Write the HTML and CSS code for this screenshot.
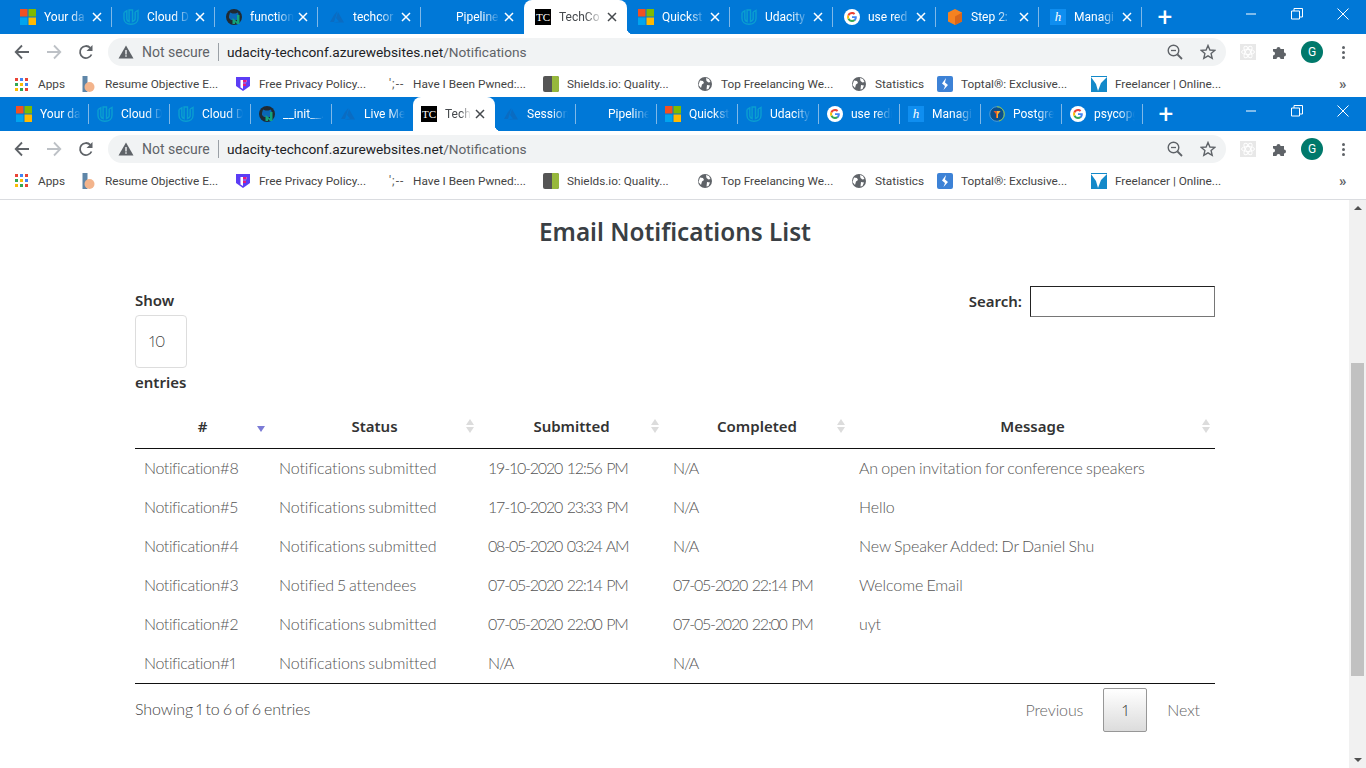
FILE: index.html
```html
<!DOCTYPE html>
<html lang="en">
<head>
  <meta charset="UTF-8">
  <title>TechConf - Email Notifications</title>
  <link rel="stylesheet" href="styles.css">
</head>
<body>
  <svg class="defs" width="0" height="0" aria-hidden="true">
    <symbol id="i-ms" viewBox="0 0 16 16">
      <rect width="7.500" height="7.500" fill="#f25022"/><rect x="8.500" width="7.500" height="7.500" fill="#7fba00"/>
      <rect y="8.500" width="7.500" height="7.500" fill="#00a4ef"/><rect x="8.500" y="8.500" width="7.500" height="7.500" fill="#ffb900"/>
    </symbol>
    <symbol id="i-uda" viewBox="0 0 16 16">
      <g fill="none" stroke="#0a9fd0" stroke-width="1.400">
        <path d="M1 3.500v6c0 3.500 3 5.800 7 5.800s7-2.300 7-5.800V1.500l-2.800 1.500"/>
        <path d="M1 3.500L3.800 1.800v7.700c0 1.600.8 2.700 2.300 3.200V1h3.400v11.500c1.600-.5 2.700-1.500 2.700-3V3"/>
      </g>
    </symbol>
    <symbol id="i-gh" viewBox="0 0 16 16">
      <circle cx="8" cy="8" r="8" fill="#1f2a33"/>
      <path d="M3 7l1-3.500 2.500 1h3l2.500-1L13 7v2l-2 2H5L3 9z" fill="#0a66b5"/>
      <path d="M6.500 15V9l4.500 3.500V6h2.500v9H11L9 13v2z" fill="#12a37c"/>
    </symbol>
    <symbol id="i-az" viewBox="0 0 16 16">
      <path d="M8.500 2L5 6 1 13h4zM9 3L7 9l3 3.500-5 1h10z" fill="#0a6cc2"/>
    </symbol>
    <symbol id="i-g" viewBox="0 0 16 16">
      <circle cx="8" cy="8" r="8" fill="#fff"/>
      <path d="M12.800 8.200c0-.4 0-.7-.1-1H8v1.900h2.700c-.1.700-.5 1.200-1 1.600l1.500 1.200c.9-.9 1.600-2.100 1.600-3.700z" fill="#4285f4"/>
      <path d="M8 13c1.300 0 2.400-.4 3.200-1.200l-1.500-1.200c-.4.3-1 .5-1.700.5-1.300 0-2.400-.9-2.800-2L3.600 10.300C4.400 11.900 6.100 13 8 13z" fill="#34a853"/>
      <path d="M5.200 9.100c-.2-.7-.2-1.500 0-2.200L3.600 5.700c-.7 1.400-.7 3.200 0 4.600z" fill="#fbbc05"/>
      <path d="M8 5c.7 0 1.400.3 1.900.7l1.400-1.400C10.400 3.500 9.300 3 8 3 6.100 3 4.400 4.100 3.600 5.700l1.600 1.200C5.600 5.800 6.700 5 8 5z" fill="#ea4335"/>
    </symbol>
    <symbol id="i-cube" viewBox="0 0 16 16">
      <path d="M8 0l7 3.500v9L8 16l-7-3.500v-9z" fill="#f58220"/><path d="M8 7.500V16l7-3.500v-9z" fill="#d9661a"/>
    </symbol>
    <symbol id="i-pg" viewBox="0 0 16 16">
      <circle cx="8" cy="8" r="7.300" fill="#0a4f8c" stroke="#4c9bd6"/>
      <path d="M8 .7A7.300 7.300 0 0 1 15.300 8A7.300 7.300 0 0 1 10 15" fill="none" stroke="#8bc34a"/>
      <path d="M4.500 5h7L9 8v4H7V8z" fill="#e65a2b"/><path d="M8 5h3.500L9 8v4H8z" fill="#f2b134"/>
    </symbol>
    <symbol id="i-globe" viewBox="0 0 16 16">
      <circle cx="8" cy="8" r="7" fill="#5f6368"/>
      <path d="M3 4.500l3 .5 1 2-2 1.500-1 3.500-2.500-3zM9 2l3 1 1.500 3-2 .5-2-1.500zM10 9l3 .5-1.500 3.500-2 .5z" fill="#fff"/>
    </symbol>
    <symbol id="i-close" viewBox="0 0 10 10">
      <path d="M1 1l8 8M9 1L1 9" fill="none" stroke="currentColor" stroke-width="1.500"/>
    </symbol>
    <symbol id="i-warn" viewBox="0 0 16 16"><path d="M8 1.500L15.500 14.500H.5z" fill="#5f6368"/><path d="M7.300 6h1.400v4.500H7.300zM7.300 11.300h1.400v1.400H7.300z" fill="#f1f3f4"/></symbol>
    <symbol id="i-back" viewBox="0 0 16 16"><path d="M15 8H2M8 1.500L1.700 8 8 14.500" fill="none" stroke="currentColor" stroke-width="1.800"/></symbol>
    <symbol id="i-reload" viewBox="0 0 16 16"><path d="M13.500 10.500A6 6 0 1 1 12.300 3.800" fill="none" stroke="#5f6368" stroke-width="1.800"/><path d="M14.500 1v6h-6z" fill="#5f6368"/></symbol>
    <symbol id="i-zoom" viewBox="0 0 16 16"><circle cx="6.500" cy="6.500" r="5.300" fill="none" stroke="#5f6368" stroke-width="1.400"/><path d="M10.500 10.500L15 15" stroke="#5f6368" stroke-width="1.800"/><path d="M4 6.500h5" stroke="#5f6368" stroke-width="1.300"/></symbol>
    <symbol id="i-star" viewBox="0 0 16 16"><path d="M8 1.500l1.900 4.500 4.800.4-3.600 3.200 1.100 4.700L8 11.800l-4.200 2.500 1.100-4.700-3.600-3.200 4.800-.4z" fill="none" stroke="#5f6368" stroke-width="1.400"/></symbol>
    <symbol id="i-atom" viewBox="0 0 16 16"><rect width="16" height="16" fill="#e8e8e8"/><g fill="none" stroke="#fff"><ellipse cx="8" cy="8" rx="6.500" ry="2.500"/><ellipse cx="8" cy="8" rx="6.500" ry="2.500" transform="rotate(60 8 8)"/><ellipse cx="8" cy="8" rx="6.500" ry="2.500" transform="rotate(120 8 8)"/></g></symbol>
    <symbol id="i-puzzle" viewBox="0 0 16 16"><path d="M1 5h3.500a2 2 0 1 1 4 0H12v3.500a2 2 0 1 1 0 4V15H8.500a2 2 0 1 0-4 0H1v-3.500a2 2 0 1 0 0-4z" fill="#5f6368"/></symbol>
    <symbol id="i-apps" viewBox="0 0 13 13">
      <rect width="3" height="3" fill="#ea4335"/><rect x="5" width="3" height="3" fill="#4285f4"/><rect x="10" width="3" height="3" fill="#ea4335"/>
      <rect y="5" width="3" height="3" fill="#34a853"/><rect x="5" y="5" width="3" height="3" fill="#fbbc05"/><rect x="10" y="5" width="3" height="3" fill="#4285f4"/>
      <rect y="10" width="3" height="3" fill="#fbbc05"/><rect x="5" y="10" width="3" height="3" fill="#34a853"/><rect x="10" y="10" width="3" height="3" fill="#ea4335"/>
    </symbol>
    <symbol id="i-resume" viewBox="0 0 16 16"><rect x="1.500" width="5" height="16" fill="#5f86a8"/><circle cx="8.500" cy="11" r="5" fill="#f3b48c"/></symbol>
    <symbol id="i-fp" viewBox="0 0 16 16"><path d="M1 1h14v9l-7 5-7-5z" fill="#5b3df5"/><path d="M5.500 4h6v2.200H8v1.600h3v2.100H8V13L5.500 11.500z" fill="#fff"/><path d="M8 4h3.500v2.200H8zM8 7.800h3v2.100H8z" fill="#e6197c"/></symbol>
    <symbol id="i-shields" viewBox="0 0 16 16"><rect width="16" height="16" rx="2" fill="#555"/><path d="M9 0h5a2 2 0 0 1 2 2v12a2 2 0 0 1-2 2H9z" fill="#97b83c"/></symbol>
    <symbol id="i-toptal" viewBox="0 0 16 16"><rect width="16" height="16" rx="2" fill="#3d82d6"/><path d="M9 2L5 7.500 8 10 6.500 14l4.500-5-3-2.500z" fill="#fff"/></symbol>
    <symbol id="i-free" viewBox="0 0 16 16"><rect width="16" height="16" fill="#1389c9"/><path d="M0 1h16L10 7l-3 8-2-7z" fill="#fff"/></symbol>
  </svg>

  <div class="screen">
    <header class="browser">
      <div class="tabstrip tabstrip-wide">
        <div class="tab"><svg class="fav"><use href="#i-ms"/></svg><span class="tab-title">Your da</span><svg class="tab-x"><use href="#i-close"/></svg></div>
        <div class="tab"><svg class="fav"><use href="#i-uda"/></svg><span class="tab-title">Cloud D</span><svg class="tab-x"><use href="#i-close"/></svg></div>
        <div class="tab"><svg class="fav"><use href="#i-gh"/></svg><span class="tab-title">function</span><svg class="tab-x"><use href="#i-close"/></svg></div>
        <div class="tab"><svg class="fav"><use href="#i-az"/></svg><span class="tab-title">techcor</span><svg class="tab-x"><use href="#i-close"/></svg></div>
        <div class="tab"><span class="fav"></span><span class="tab-title">Pipeline</span><svg class="tab-x"><use href="#i-close"/></svg></div>
        <div class="tab tab-active"><span class="fav fav-tc">TC</span><span class="tab-title">TechCo</span><svg class="tab-x"><use href="#i-close"/></svg></div>
        <div class="tab"><svg class="fav"><use href="#i-ms"/></svg><span class="tab-title">Quickst</span><svg class="tab-x"><use href="#i-close"/></svg></div>
        <div class="tab"><svg class="fav"><use href="#i-uda"/></svg><span class="tab-title">Udacity</span><svg class="tab-x"><use href="#i-close"/></svg></div>
        <div class="tab"><svg class="fav"><use href="#i-g"/></svg><span class="tab-title">use red</span><svg class="tab-x"><use href="#i-close"/></svg></div>
        <div class="tab"><svg class="fav"><use href="#i-cube"/></svg><span class="tab-title">Step 2:</span><svg class="tab-x"><use href="#i-close"/></svg></div>
        <div class="tab"><span class="fav fav-h">h</span><span class="tab-title">Managi</span><svg class="tab-x"><use href="#i-close"/></svg></div>
        <button class="new-tab">+</button>
        <div class="winctl">
          <svg width="12" height="12" viewBox="0 0 12 12"><path d="M1 6h10" stroke="#fff"/></svg>
          <svg width="12" height="12" viewBox="0 0 12 12"><path d="M.5 3h8v8h-8zM3 3V.5h8.500V9H8.500" fill="none" stroke="#fff"/></svg>
          <svg width="12" height="12" viewBox="0 0 12 12"><path d="M.5.500l11 11M11.500.500l-11 11" stroke="#fff"/></svg>
        </div>
      </div>
      <div class="toolbar">
        <svg class="nav"><use href="#i-back"/></svg>
        <svg class="nav nav-off nav-flip"><use href="#i-back"/></svg>
        <svg class="nav"><use href="#i-reload"/></svg>
        <div class="omnibox">
          <svg class="warn"><use href="#i-warn"/></svg>
          <span class="not-secure">Not secure</span>
          <span class="url"><b>udacity-techconf.azurewebsites.net</b>/Notifications</span>
          <svg class="omni-ic"><use href="#i-zoom"/></svg>
          <svg class="omni-ic"><use href="#i-star"/></svg>
        </div>
        <svg class="ext"><use href="#i-atom"/></svg>
        <svg class="ext"><use href="#i-puzzle"/></svg>
        <span class="avatar">G</span>
        <span class="kebab"><i></i><i></i><i></i></span>
      </div>
      <div class="bookmarks">
        <a><svg class="bm-ic bm-apps"><use href="#i-apps"/></svg>Apps</a>
        <a><svg class="bm-ic"><use href="#i-resume"/></svg>Resume Objective E...</a>
        <a><svg class="bm-ic"><use href="#i-fp"/></svg>Free Privacy Policy...</a>
        <a><span class="bm-ic bm-semi">';--</span>Have I Been Pwned:...</a>
        <a><svg class="bm-ic"><use href="#i-shields"/></svg>Shields.io: Quality...</a>
        <a><svg class="bm-ic"><use href="#i-globe"/></svg>Top Freelancing We...</a>
        <a><svg class="bm-ic"><use href="#i-globe"/></svg>Statistics</a>
        <a><svg class="bm-ic"><use href="#i-toptal"/></svg>Toptal®: Exclusive...</a>
        <a><svg class="bm-ic"><use href="#i-free"/></svg>Freelancer | Online...</a>
        <span class="bm-more">»</span>
      </div>
    </header>

    <header class="browser browser-second">
      <div class="tabstrip tabstrip-narrow">
        <div class="tab"><svg class="fav"><use href="#i-ms"/></svg><span class="tab-title">Your da</span></div>
        <div class="tab"><svg class="fav"><use href="#i-uda"/></svg><span class="tab-title">Cloud D</span></div>
        <div class="tab"><svg class="fav"><use href="#i-uda"/></svg><span class="tab-title">Cloud D</span></div>
        <div class="tab"><svg class="fav"><use href="#i-gh"/></svg><span class="tab-title">__init__.</span></div>
        <div class="tab"><svg class="fav"><use href="#i-az"/></svg><span class="tab-title">Live Me</span></div>
        <div class="tab tab-active"><span class="fav fav-tc">TC</span><span class="tab-title">Tech</span><svg class="tab-x"><use href="#i-close"/></svg></div>
        <div class="tab"><svg class="fav"><use href="#i-az"/></svg><span class="tab-title">Session</span></div>
        <div class="tab"><span class="fav"></span><span class="tab-title">Pipeline</span></div>
        <div class="tab"><svg class="fav"><use href="#i-ms"/></svg><span class="tab-title">Quickst</span></div>
        <div class="tab"><svg class="fav"><use href="#i-uda"/></svg><span class="tab-title">Udacity</span></div>
        <div class="tab"><svg class="fav"><use href="#i-g"/></svg><span class="tab-title">use redi</span></div>
        <div class="tab"><span class="fav fav-h">h</span><span class="tab-title">Managi</span></div>
        <div class="tab"><svg class="fav"><use href="#i-pg"/></svg><span class="tab-title">Postgre</span></div>
        <div class="tab"><svg class="fav"><use href="#i-g"/></svg><span class="tab-title">psycopg</span></div>
        <button class="new-tab">+</button>
        <div class="winctl">
          <svg width="12" height="12" viewBox="0 0 12 12"><path d="M1 6h10" stroke="#fff"/></svg>
          <svg width="12" height="12" viewBox="0 0 12 12"><path d="M.5 3h8v8h-8zM3 3V.5h8.500V9H8.500" fill="none" stroke="#fff"/></svg>
          <svg width="12" height="12" viewBox="0 0 12 12"><path d="M.5.500l11 11M11.500.500l-11 11" stroke="#fff"/></svg>
        </div>
      </div>
      <div class="toolbar">
        <svg class="nav"><use href="#i-back"/></svg>
        <svg class="nav nav-off nav-flip"><use href="#i-back"/></svg>
        <svg class="nav"><use href="#i-reload"/></svg>
        <div class="omnibox">
          <svg class="warn"><use href="#i-warn"/></svg>
          <span class="not-secure">Not secure</span>
          <span class="url"><b>udacity-techconf.azurewebsites.net</b>/Notifications</span>
          <svg class="omni-ic"><use href="#i-zoom"/></svg>
          <svg class="omni-ic"><use href="#i-star"/></svg>
        </div>
        <svg class="ext"><use href="#i-atom"/></svg>
        <svg class="ext"><use href="#i-puzzle"/></svg>
        <span class="avatar">G</span>
        <span class="kebab"><i></i><i></i><i></i></span>
      </div>
      <div class="bookmarks">
        <a><svg class="bm-ic bm-apps"><use href="#i-apps"/></svg>Apps</a>
        <a><svg class="bm-ic"><use href="#i-resume"/></svg>Resume Objective E...</a>
        <a><svg class="bm-ic"><use href="#i-fp"/></svg>Free Privacy Policy...</a>
        <a><span class="bm-ic bm-semi">';--</span>Have I Been Pwned:...</a>
        <a><svg class="bm-ic"><use href="#i-shields"/></svg>Shields.io: Quality...</a>
        <a><svg class="bm-ic"><use href="#i-globe"/></svg>Top Freelancing We...</a>
        <a><svg class="bm-ic"><use href="#i-globe"/></svg>Statistics</a>
        <a><svg class="bm-ic"><use href="#i-toptal"/></svg>Toptal®: Exclusive...</a>
        <a><svg class="bm-ic"><use href="#i-free"/></svg>Freelancer | Online...</a>
        <span class="bm-more">»</span>
      </div>
    </header>

    <div class="viewport">
      <main class="content">
        <h1>Email Notifications List</h1>
        <div class="dt-top">
          <div class="dt-length">
            <label>Show</label>
            <div class="dt-select">10</div>
            <label>entries</label>
          </div>
          <div class="dt-search">
            <label>Search:</label>
            <input type="text">
          </div>
        </div>
        <table class="dt">
          <colgroup>
            <col class="c1"><col class="c2"><col class="c3"><col class="c4"><col class="c5">
          </colgroup>
          <thead>
            <tr>
              <th class="sorted">#</th>
              <th>Status</th>
              <th>Submitted</th>
              <th>Completed</th>
              <th>Message</th>
            </tr>
          </thead>
          <tbody>
            <tr><td>Notification#8</td><td>Notifications submitted</td><td>19-10-2020 12:56 PM</td><td>N/A</td><td>An open invitation for conference speakers</td></tr>
            <tr><td>Notification#5</td><td>Notifications submitted</td><td>17-10-2020 23:33 PM</td><td>N/A</td><td>Hello</td></tr>
            <tr><td>Notification#4</td><td>Notifications submitted</td><td>08-05-2020 03:24 AM</td><td>N/A</td><td>New Speaker Added: Dr Daniel Shu</td></tr>
            <tr><td>Notification#3</td><td>Notified 5 attendees</td><td>07-05-2020 22:14 PM</td><td>07-05-2020 22:14 PM</td><td>Welcome Email</td></tr>
            <tr><td>Notification#2</td><td>Notifications submitted</td><td>07-05-2020 22:00 PM</td><td>07-05-2020 22:00 PM</td><td>uyt</td></tr>
            <tr><td>Notification#1</td><td>Notifications submitted</td><td>N/A</td><td>N/A</td><td></td></tr>
          </tbody>
        </table>
        <div class="dt-bottom">
          <div class="dt-info">Showing 1 to 6 of 6 entries</div>
          <div class="dt-pages">
            <a>Previous</a>
            <a class="current">1</a>
            <a>Next</a>
          </div>
        </div>
      </main>
      <div class="scrollbar">
        <span class="sb-up"></span>
        <div class="sb-thumb"></div>
        <span class="sb-down"></span>
      </div>
    </div>
  </div>
</body>
</html>
```

FILE: styles.css
```css
* { box-sizing: border-box; }
body { margin: 0; font-family: "Lato", Arial, sans-serif; font-weight: 300; font-size: 16px; color: #555; background: #fff; letter-spacing: -0.1px; word-spacing: -1px; font-variant-numeric: proportional-nums; }
.defs { position: absolute; }
.screen { width: 1366px; height: 768px; overflow: hidden; display: flex; flex-direction: column; }

/* browser chrome */
.browser { font-family: "Roboto", Arial, sans-serif; font-weight: 400; flex: none; letter-spacing: 0; word-spacing: 0; }
.browser-second { border-bottom: 1px solid #dadce0; }
.tabstrip { height: 34px; background: #0078d7; display: flex; color: #fff; font-size: 12px; position: relative; }
.tabstrip-wide { padding-left: 9px; }
.tabstrip-narrow { padding-left: 8px; }
.tab { height: 34px; display: flex; align-items: center; position: relative; flex: none; }
.tab::after { content: ""; position: absolute; right: 0; top: 7px; width: 1px; height: 20px; background: #7fb8e8; }
.tab:has(+ .tab-active)::after { display: none; }
.tabstrip-wide .tab { width: 103px; padding-left: 11px; }
.tabstrip-narrow .tab { width: 81px; padding-left: 8px; }
.tab-active { background: #fff; color: #45494d; border-radius: 8px 8px 0 0; }
.tab-active::after { display: none; }
.tab-active::before { content: ""; position: absolute; right: -6px; bottom: 0; width: 6px; height: 6px; background: radial-gradient(circle at 100% 0, transparent 6px, #fff 6.500px); }
.tabstrip-narrow .tab-active { width: 82px; }
.fav { width: 16px; height: 16px; flex: none; margin-right: 8px; }
.fav-tc { background: #000; color: #fff; font: 11px/16px "Liberation Serif", serif; text-align: center; }
.fav-h { background: #0f8ef0; color: #fff; font: italic 13px/16px "Liberation Serif", serif; text-align: center; }
.tab-title { flex: 1; min-width: 0; overflow: hidden; white-space: nowrap; -webkit-mask-image: linear-gradient(90deg, #000 60%, transparent); mask-image: linear-gradient(90deg, #000 60%, transparent); }
.tabstrip-wide .tab-title { max-width: 44px; }
.tabstrip-narrow .tab-title { max-width: 41px; }
.tabstrip-narrow .tab-active .tab-title { max-width: 26px; }
.tab-x { width: 10px; height: 10px; flex: none; margin-left: auto; margin-right: 10px; color: #fff; }
.tab-active .tab-x { color: #45494d; }
.new-tab { width: 20px; height: 34px; margin-left: 13px; padding: 0; background: none; border: 0; color: #fff; font: 400 26px/32px "Roboto", Arial, sans-serif; flex: none; }
.winctl { position: absolute; right: 17px; top: 8px; display: flex; gap: 34px; }

.toolbar { height: 34px; background: #fff; display: flex; align-items: center; padding: 2px 0 0 14px; }
.nav { width: 16px; height: 16px; margin-right: 16px; color: #5f6368; flex: none; }
.nav-off { color: #bdc1c6; }
.nav-flip { transform: scaleX(-1); }
.omnibox { width: 1118px; height: 28px; margin-left: -2px; margin-right: 14px; border-radius: 14px; background: #f1f3f4; display: flex; align-items: center; padding-left: 10px; font-size: 14px; color: #5f6368; flex: none; }
.warn { width: 16px; height: 16px; margin-right: 8px; flex: none; }
.not-secure { width: 77px; border-right: 1px solid #9aa0a6; line-height: 18px; white-space: nowrap; }
.url { margin-left: 8px; flex: 1; white-space: nowrap; font-size: 13.700px; }
.url b { font-weight: 400; color: #202124; }
.omni-ic { width: 16px; height: 16px; margin-right: 17px; flex: none; }
.omni-ic:last-child { margin-right: 10px; }
.ext { width: 16px; height: 16px; margin-right: 16px; flex: none; }
.ext + .ext { margin-right: 13px; }
.avatar { width: 22px; height: 22px; border-radius: 50%; background: #00796b; color: #fff; text-align: center; font-size: 12px; line-height: 22px; flex: none; }
.kebab { margin-left: 19px; display: flex; flex-direction: column; gap: 2px; }
.kebab i { width: 3px; height: 3px; border-radius: 50%; background: #5f6368; display: block; }

.bookmarks { height: 29px; background: #fff; display: grid; grid-template-columns: 66px 154px 154px 154px 154px 154px 86px 154px 228px 1fr; padding: 3px 0 0 15px; align-items: center; font-size: 11.800px; color: #444; white-space: nowrap; }
.browser-second .bookmarks { height: 34px; padding: 0 0 3px 15px; }
.bookmarks a { display: flex; align-items: center; }
.bm-ic { width: 16px; height: 16px; margin-right: 8px; flex: none; }
.bm-apps { width: 13px; height: 13px; margin-right: 10px; }
.bm-semi { color: #555; font-size: 12px; line-height: 16px; letter-spacing: 1px; }
.bm-more { font-size: 15px; font-weight: 700; color: #5f6368; padding-left: 20px; }

/* page */
.viewport { flex: 1; min-height: 0; display: flex; }
.content { flex: 1; min-width: 0; padding: 0 134px 0 135px; }
h1 { margin: 13px 0 0; height: 39px; font: 600 24.300px/38px "Noto Sans", Arial, sans-serif; letter-spacing: 0; word-spacing: 0; color: #3a3f44; text-align: center; }
.dt-top { display: flex; justify-content: space-between; margin-top: 34px; }
.dt-length label, .dt-search label { display: block; font: 600 15px/22px "Noto Sans", Arial, sans-serif; letter-spacing: 0; word-spacing: 0; color: #333; }
.dt-length { padding-top: 3px; }
.dt-select { width: 52px; height: 53px; margin: 4px 0 3px; padding-left: 13px; border: 1px solid #ddd; border-radius: 4px; line-height: 50px; color: #444; }
.dt-search { display: flex; gap: 8px; align-items: center; height: 31px; }
.dt-search label { margin-top: -2px; }
.dt-search input { width: 185px; height: 31px; border: 1px solid #767676; border-top-color: #222; border-left-color: #222; background: #fff; }

.dt { width: 1080px; border-collapse: collapse; table-layout: fixed; margin-top: 11px; border-bottom: 1px solid #111; }
.c1 { width: 135px; } .c2 { width: 209px; } .c3 { width: 185px; } .c4 { width: 186px; } .c5 { width: 365px; }
.dt th { height: 44px; position: relative; font: 600 15px/22px "Noto Sans", Arial, sans-serif; letter-spacing: 0; word-spacing: 0; color: #333; border-bottom: 1px solid #111; padding: 0; text-align: center; }
.dt th::before, .dt th::after { content: ""; position: absolute; right: 5px; border-left: 4px solid transparent; border-right: 4px solid transparent; }
.dt th::before { top: 15px; border-bottom: 6px solid #dcdcdc; }
.dt th::after { top: 23px; border-top: 6px solid #dcdcdc; }
.dt th.sorted::before { border-bottom-color: transparent; }
.dt th.sorted::after { top: 22px; border-top-color: #7b7bd6; }
.dt td { height: 39px; padding: 0 9px; white-space: nowrap; color: #555; }
.dt td:first-child { letter-spacing: -0.4px; }
.dt td:nth-child(3), .dt td:nth-child(4) { font-variant-numeric: tabular-nums; letter-spacing: -1.200px; word-spacing: 1.500px; }
.dt tr:last-child td { height: 40px; padding-bottom: 1px; }
.dt-bottom { display: flex; justify-content: space-between; }
.dt-info { padding-top: 14px; line-height: 22px; color: #444; }
.dt-pages { display: flex; align-items: center; margin-top: 4px; padding-right: 15px; color: #666; }
.dt-pages a { display: block; padding: 0 20px; line-height: 44px; height: 44px; }
.dt-pages a:first-child { padding-left: 0; }
.dt-pages a:last-child { padding-right: 0; }
.dt-pages .current { width: 44px; padding: 0; text-align: center; color: #333; border: 1px solid #979797; border-radius: 2px; line-height: 42px; background: linear-gradient(#fff, #dcdcdc); }

.scrollbar { width: 17px; flex: none; background: #f1f1f1; position: relative; }
.sb-thumb { width: 13px; height: 313px; margin: 163px 0 0 2px; background: #c1c1c1; }
.sb-up, .sb-down { position: absolute; left: 5px; border-left: 4px solid transparent; border-right: 4px solid transparent; }
.sb-up { top: 6px; border-bottom: 4px solid #505050; }
.sb-down { bottom: 6px; border-top: 4px solid #505050; }
```
